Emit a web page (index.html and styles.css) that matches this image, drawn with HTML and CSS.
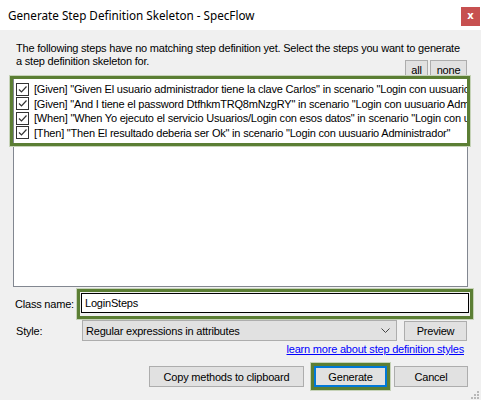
FILE: index.html
```html
<!DOCTYPE html>
<html>
<head>
<meta charset="utf-8">
<link rel="stylesheet" href="styles.css">
</head>
<body>
<div class="window">
  <div class="titlebar">
    <span class="title">Generate Step Definition Skeleton - SpecFlow</span>
    <span class="close">x</span>
  </div>
  <div class="content">
    <p class="intro">The following steps have no matching step definition yet. Select the steps you want to generate a step definition skeleton for.</p>
    <div class="selbtns">
      <span class="btn sel-all">all</span>
      <span class="btn sel-none">none</span>
    </div>
    <div class="listbox">
      <div class="items">
        <div class="item"><span class="chk"><svg width="13" height="13" viewBox="0 0 13 13"><path d="M3 6.5 L5.5 9 L10.5 3.5" fill="none" stroke="#333" stroke-width="1.2"/></svg></span><span class="itext">[Given] "Given El usuario administrador tiene la clave Carlos" in scenario "Login con uusuario Administrador"</span></div>
        <div class="item"><span class="chk"><svg width="13" height="13" viewBox="0 0 13 13"><path d="M3 6.5 L5.5 9 L10.5 3.5" fill="none" stroke="#333" stroke-width="1.2"/></svg></span><span class="itext">[Given] "And I tiene el password DtfhkmTRQ8mNzgRY" in scenario "Login con uusuario Administrador"</span></div>
        <div class="item"><span class="chk"><svg width="13" height="13" viewBox="0 0 13 13"><path d="M3 6.5 L5.5 9 L10.5 3.5" fill="none" stroke="#333" stroke-width="1.2"/></svg></span><span class="itext">[When] "When Yo ejecuto el servicio Usuarios/Login con esos datos" in scenario "Login con uusuario Administrador"</span></div>
        <div class="item"><span class="chk"><svg width="13" height="13" viewBox="0 0 13 13"><path d="M3 6.5 L5.5 9 L10.5 3.5" fill="none" stroke="#333" stroke-width="1.2"/></svg></span><span class="itext">[Then] "Then El resultado deberia ser Ok" in scenario "Login con uusuario Administrador"</span></div>
        <div class="mark mark-items"></div>
      </div>
    </div>
    <div class="row class-row">
      <label class="lbl">Class name:</label>
      <div class="mark-input">
        <div class="textbox">LoginSteps</div>
      </div>
    </div>
    <div class="row style-row">
      <label class="lbl lbl-style">Style:</label>
      <div class="combo">
        <span>Regular expressions in attributes</span>
        <svg class="chev" width="9" height="5" viewBox="0 0 9 5"><path d="M0.5 0.5 L4.5 4.5 L8.5 0.5" fill="none" stroke="#444" stroke-width="1"/></svg>
      </div>
      <span class="btn preview">Preview</span>
    </div>
    <div class="linkrow"><a class="link" href="#">learn more about step definition styles</a></div>
    <div class="row actions">
      <span class="btn copy">Copy methods to clipboard</span>
      <div class="mark-gen"><span class="btn gen">Generate</span></div>
      <span class="btn cancel">Cancel</span>
    </div>
  </div>
  <svg class="grip" width="10" height="10" viewBox="0 0 10 10">
    <rect x="7" y="1" width="2" height="2" fill="#b8b8b8"/>
    <rect x="4" y="4" width="2" height="2" fill="#b8b8b8"/>
    <rect x="7" y="4" width="2" height="2" fill="#b8b8b8"/>
    <rect x="1" y="7" width="2" height="2" fill="#b8b8b8"/>
    <rect x="4" y="7" width="2" height="2" fill="#b8b8b8"/>
    <rect x="7" y="7" width="2" height="2" fill="#b8b8b8"/>
  </svg>
</div>
</body>
</html>
```

FILE: styles.css
```css
html, body {
  margin: 0;
  padding: 0;
}
body {
  width: 481px;
  height: 400px;
  overflow: hidden;
  background: #f0f0f0;
  font-family: "Liberation Sans", Arial, sans-serif;
  font-size: 11px;
  letter-spacing: -0.2px;
  color: #000;
}
.window {
  position: relative;
  width: 481px;
  height: 400px;
  background: #f0f0f0;
}
.titlebar {
  height: 30px;
  background: #fff;
  display: flex;
  align-items: center;
  justify-content: space-between;
  padding-left: 8px;
  box-sizing: border-box;
}
.title {
  font-family: "Noto Sans", "Open Sans", sans-serif;
  font-size: 11.7px;
  letter-spacing: 0;
  color: #000;
  margin-top: -1px;
}
.close {
  width: 19px;
  height: 19px;
  margin-right: 1px;
  margin-top: 2px;
  background: #c75050;
  color: #fff;
  font-family: "DejaVu Sans", sans-serif;
  font-weight: bold;
  font-size: 10px;
  letter-spacing: 0;
  line-height: 17px;
  text-align: center;
}
.content {
  padding: 0 13px;
}
.intro {
  margin: 12px 0 0 3px;
  line-height: 13px;
  width: 452px;
}
.selbtns {
  display: flex;
  justify-content: flex-end;
  gap: 2px;
  margin-top: -8px;
  padding-right: 1px;
}
.btn {
  display: inline-flex;
  align-items: center;
  justify-content: center;
  box-sizing: border-box;
  background: #e1e1e1;
  border: 1px solid #adadad;
  height: 21px;
  font-size: 11px;
  white-space: nowrap;
}
.sel-all { width: 23px; height: 20px; }
.sel-none { width: 37px; height: 20px; }
.listbox {
  margin-top: -2px;
  height: 209px;
  background: #fff;
  border: 1px solid #828790;
  box-sizing: border-box;
  position: relative;
}
.items {
  padding-top: 3px;
  position: relative;
}
.item {
  display: flex;
  align-items: center;
  height: 14.5px;
  padding-left: 2px;
  overflow: hidden;
  white-space: nowrap;
  width: 451px;
}
.chk {
  width: 13px;
  height: 13px;
  box-sizing: border-box;
  border: 1px solid #333;
  background: #fff;
  display: inline-flex;
  flex: none;
  position: relative;
}
.chk svg {
  position: absolute;
  left: -1px;
  top: -1px;
}
.itext {
  margin-left: 5px;
}
.mark {
  position: absolute;
  border: 3px solid #5b7e34;
  box-shadow: 0 0 0 1px #c6d3b8;
  box-sizing: border-box;
}
.mark-items {
  left: -4px;
  top: -3px;
  width: 460px;
  height: 70px;
}
.row {
  display: flex;
  align-items: center;
}
.class-row {
  margin-top: 2px;
  height: 30px;
}
.lbl {
  width: 64px;
  padding-left: 2px;
  box-sizing: border-box;
  flex: none;
}
.lbl-style {
  width: 69px;
  padding-left: 3px;
}
.mark-input {
  flex: none;
  width: 396px;
  height: 30px;
  border: 3px solid #5b7e34;
  box-shadow: 0 0 0 1px #c6d3b8;
  box-sizing: border-box;
  padding: 1px 1px 0 1px;
  margin-right: -5px;
}
.textbox {
  height: 20px;
  border: 1px solid #000;
  background: #fff;
  box-sizing: border-box;
  padding-left: 3px;
  line-height: 18px;
}
.style-row {
  margin-top: 1px;
  height: 21px;
}
.combo {
  width: 315px;
  height: 21px;
  box-sizing: border-box;
  background: #e1e1e1;
  border: 1px solid #adadad;
  display: flex;
  align-items: center;
  justify-content: space-between;
  padding: 0 6px 0 3px;
}
.chev {
  display: block;
}
.preview {
  width: 63px;
  height: 20px;
  margin-left: 7px;
}
.linkrow {
  text-align: right;
  padding-right: 4px;
  margin-top: 2px;
  line-height: 13px;
}
.link {
  color: #0000ff;
  text-decoration: underline;
}
.actions {
  justify-content: flex-end;
  margin-top: 7px;
  height: 27px;
}
.copy {
  width: 155px;
}
.mark-gen {
  margin-left: 7px;
  width: 79px;
  height: 27px;
  border: 3px solid #5b7e34;
  box-shadow: 0 0 0 1px #c6d3b8;
  box-sizing: border-box;
  display: flex;
}
.gen {
  width: 73px;
  height: 21px;
  border: 2px solid #0078d7;
}
.cancel {
  width: 74px;
  margin-left: 4px;
}
.grip {
  position: absolute;
  right: 1px;
  bottom: 0;
}
```
